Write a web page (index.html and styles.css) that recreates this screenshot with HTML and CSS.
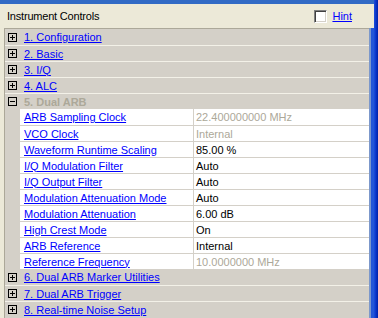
FILE: index.html
```html
<!DOCTYPE html>
<html>
<head>
    <title>Instrument Controls</title>
    <link rel="stylesheet" href="styles.css">
</head>
<body>
    <div class="window">
        <div class="title-edge"></div>
        <div class="window-body">
            <div class="content">
                <div class="header">
                    <span class="title">Instrument Controls</span>
                    <label class="hint">
                        <span class="checkbox"></span>
                        <a href="#">Hint</a>
                    </label>
                </div>

                <div class="tree-wrap">
                    <div class="tree">
                        <div class="group"><span class="toggle plus"></span><a href="#">1. Configuration</a></div>
                        <div class="group"><span class="toggle plus"></span><a href="#">2. Basic</a></div>
                        <div class="group"><span class="toggle plus"></span><a href="#">3. I/Q</a></div>
                        <div class="group"><span class="toggle plus"></span><a href="#">4. ALC</a></div>
                        <div class="group open"><span class="toggle"></span><span class="group-title">5. Dual ARB</span></div>

                        <div class="item">
                            <div class="cell label"><a href="#">ARB Sampling Clock</a></div>
                            <div class="cell value disabled">22.400000000 MHz</div>
                        </div>
                        <div class="item">
                            <div class="cell label"><a href="#">VCO Clock</a></div>
                            <div class="cell value disabled">Internal</div>
                        </div>
                        <div class="item">
                            <div class="cell label"><a href="#">Waveform Runtime Scaling</a></div>
                            <div class="cell value">85.00 %</div>
                        </div>
                        <div class="item">
                            <div class="cell label"><a href="#">I/Q Modulation Filter</a></div>
                            <div class="cell value">Auto</div>
                        </div>
                        <div class="item">
                            <div class="cell label"><a href="#">I/Q Output Filter</a></div>
                            <div class="cell value">Auto</div>
                        </div>
                        <div class="item">
                            <div class="cell label"><a href="#">Modulation Attenuation Mode</a></div>
                            <div class="cell value">Auto</div>
                        </div>
                        <div class="item">
                            <div class="cell label"><a href="#">Modulation Attenuation</a></div>
                            <div class="cell value">6.00 dB</div>
                        </div>
                        <div class="item">
                            <div class="cell label"><a href="#">High Crest Mode</a></div>
                            <div class="cell value">On</div>
                        </div>
                        <div class="item">
                            <div class="cell label"><a href="#">ARB Reference</a></div>
                            <div class="cell value">Internal</div>
                        </div>
                        <div class="item">
                            <div class="cell label"><a href="#">Reference Frequency</a></div>
                            <div class="cell value disabled">10.0000000 MHz</div>
                        </div>

                        <div class="group"><span class="toggle plus"></span><a href="#">6. Dual ARB Marker Utilities</a></div>
                        <div class="group"><span class="toggle plus"></span><a href="#">7. Dual ARB Trigger</a></div>
                        <div class="group"><span class="toggle plus"></span><a href="#">8. Real-time Noise Setup</a></div>
                    </div>
                    <div class="scroll-edge"></div>
                </div>
            </div>
            <div class="frame-right"></div>
        </div>
    </div>
</body>
</html>
```

FILE: styles.css
```css
body {
    margin: 0;
    overflow: hidden;
    font-family: 'Liberation Sans', Arial, sans-serif;
    font-size: 11px;
    background: #ECE9D8;
}
a {
    color: #0000FF;
    text-decoration: underline;
}
.window {
    width: 378px;
    height: 318px;
    display: flex;
    flex-direction: column;
}
.title-edge {
    height: 4px;
    background: #316AC5;
    margin-right: 4px;
}
.window-body {
    flex: 1;
    display: flex;
    min-height: 0;
}
.content {
    flex: 1;
    display: flex;
    flex-direction: column;
    background: #ECE9D8;
}
.frame-right {
    width: 4px;
    margin-top: -4px;
    background: linear-gradient(90deg, #1C4FDB 0%, #0A33C8 50%, #0022A8 100%);
}
.header {
    height: 24px;
    display: flex;
    align-items: center;
    justify-content: space-between;
    padding: 0 22px 0 7px;
    box-sizing: border-box;
}
.title {
    color: #000;
    letter-spacing: -0.2px;
}
.hint {
    display: flex;
    align-items: center;
    gap: 5px;
}
.checkbox {
    width: 13px;
    height: 13px;
    box-sizing: border-box;
    background: #fff;
    border-top: 1px solid #808080;
    border-left: 1px solid #808080;
    border-right: 1px solid #fff;
    border-bottom: 1px solid #fff;
    box-shadow: inset 1px 1px 0 #404040, inset -1px -1px 0 #D4D0C8;
}
.tree-wrap {
    flex: 1;
    display: flex;
    padding-left: 4px;
    min-height: 0;
}
.tree {
    flex: 1;
    background: #D4D0C8;
    border-top: 1px solid #ACA899;
    border-left: 1px solid #ACA899;
    overflow: hidden;
}
.scroll-edge {
    width: 5px;
    background: linear-gradient(90deg, #7C98CB 0%, #7C98CB 40%, #2456D8 40%, #2456D8 100%);
}
.group {
    height: 16px;
    box-sizing: border-box;
    display: flex;
    align-items: center;
    padding-left: 3px;
    background: #D4D0C8;
}
.group + .group {
    border-top: 1px solid #F3F1E8;
}
.group-title {
    color: #ACA899;
    font-weight: bold;
}
.toggle {
    width: 9px;
    height: 9px;
    box-sizing: border-box;
    border: 1px solid #000;
    margin-right: 7px;
    position: relative;
}
.toggle::before {
    content: '';
    position: absolute;
    left: 1px;
    top: 3px;
    width: 5px;
    height: 1px;
    background: #000;
}
.toggle.plus::after {
    content: '';
    position: absolute;
    left: 3px;
    top: 1px;
    width: 1px;
    height: 5px;
    background: #000;
}
.item {
    height: 16px;
    display: flex;
    padding-left: 15px;
    background: #D4D0C8;
}
.cell {
    box-sizing: border-box;
    height: 16px;
    background: #fff;
    display: flex;
    align-items: center;
    white-space: nowrap;
}
.item + .item .cell {
    border-top: 1px solid #D4D0C8;
}
.label {
    width: 174px;
    padding-left: 4px;
    border-right: 1px solid #D4D0C8;
}
.value {
    flex: 1;
    padding-left: 2px;
    color: #000;
}
.value.disabled {
    color: #ACA899;
}
```
